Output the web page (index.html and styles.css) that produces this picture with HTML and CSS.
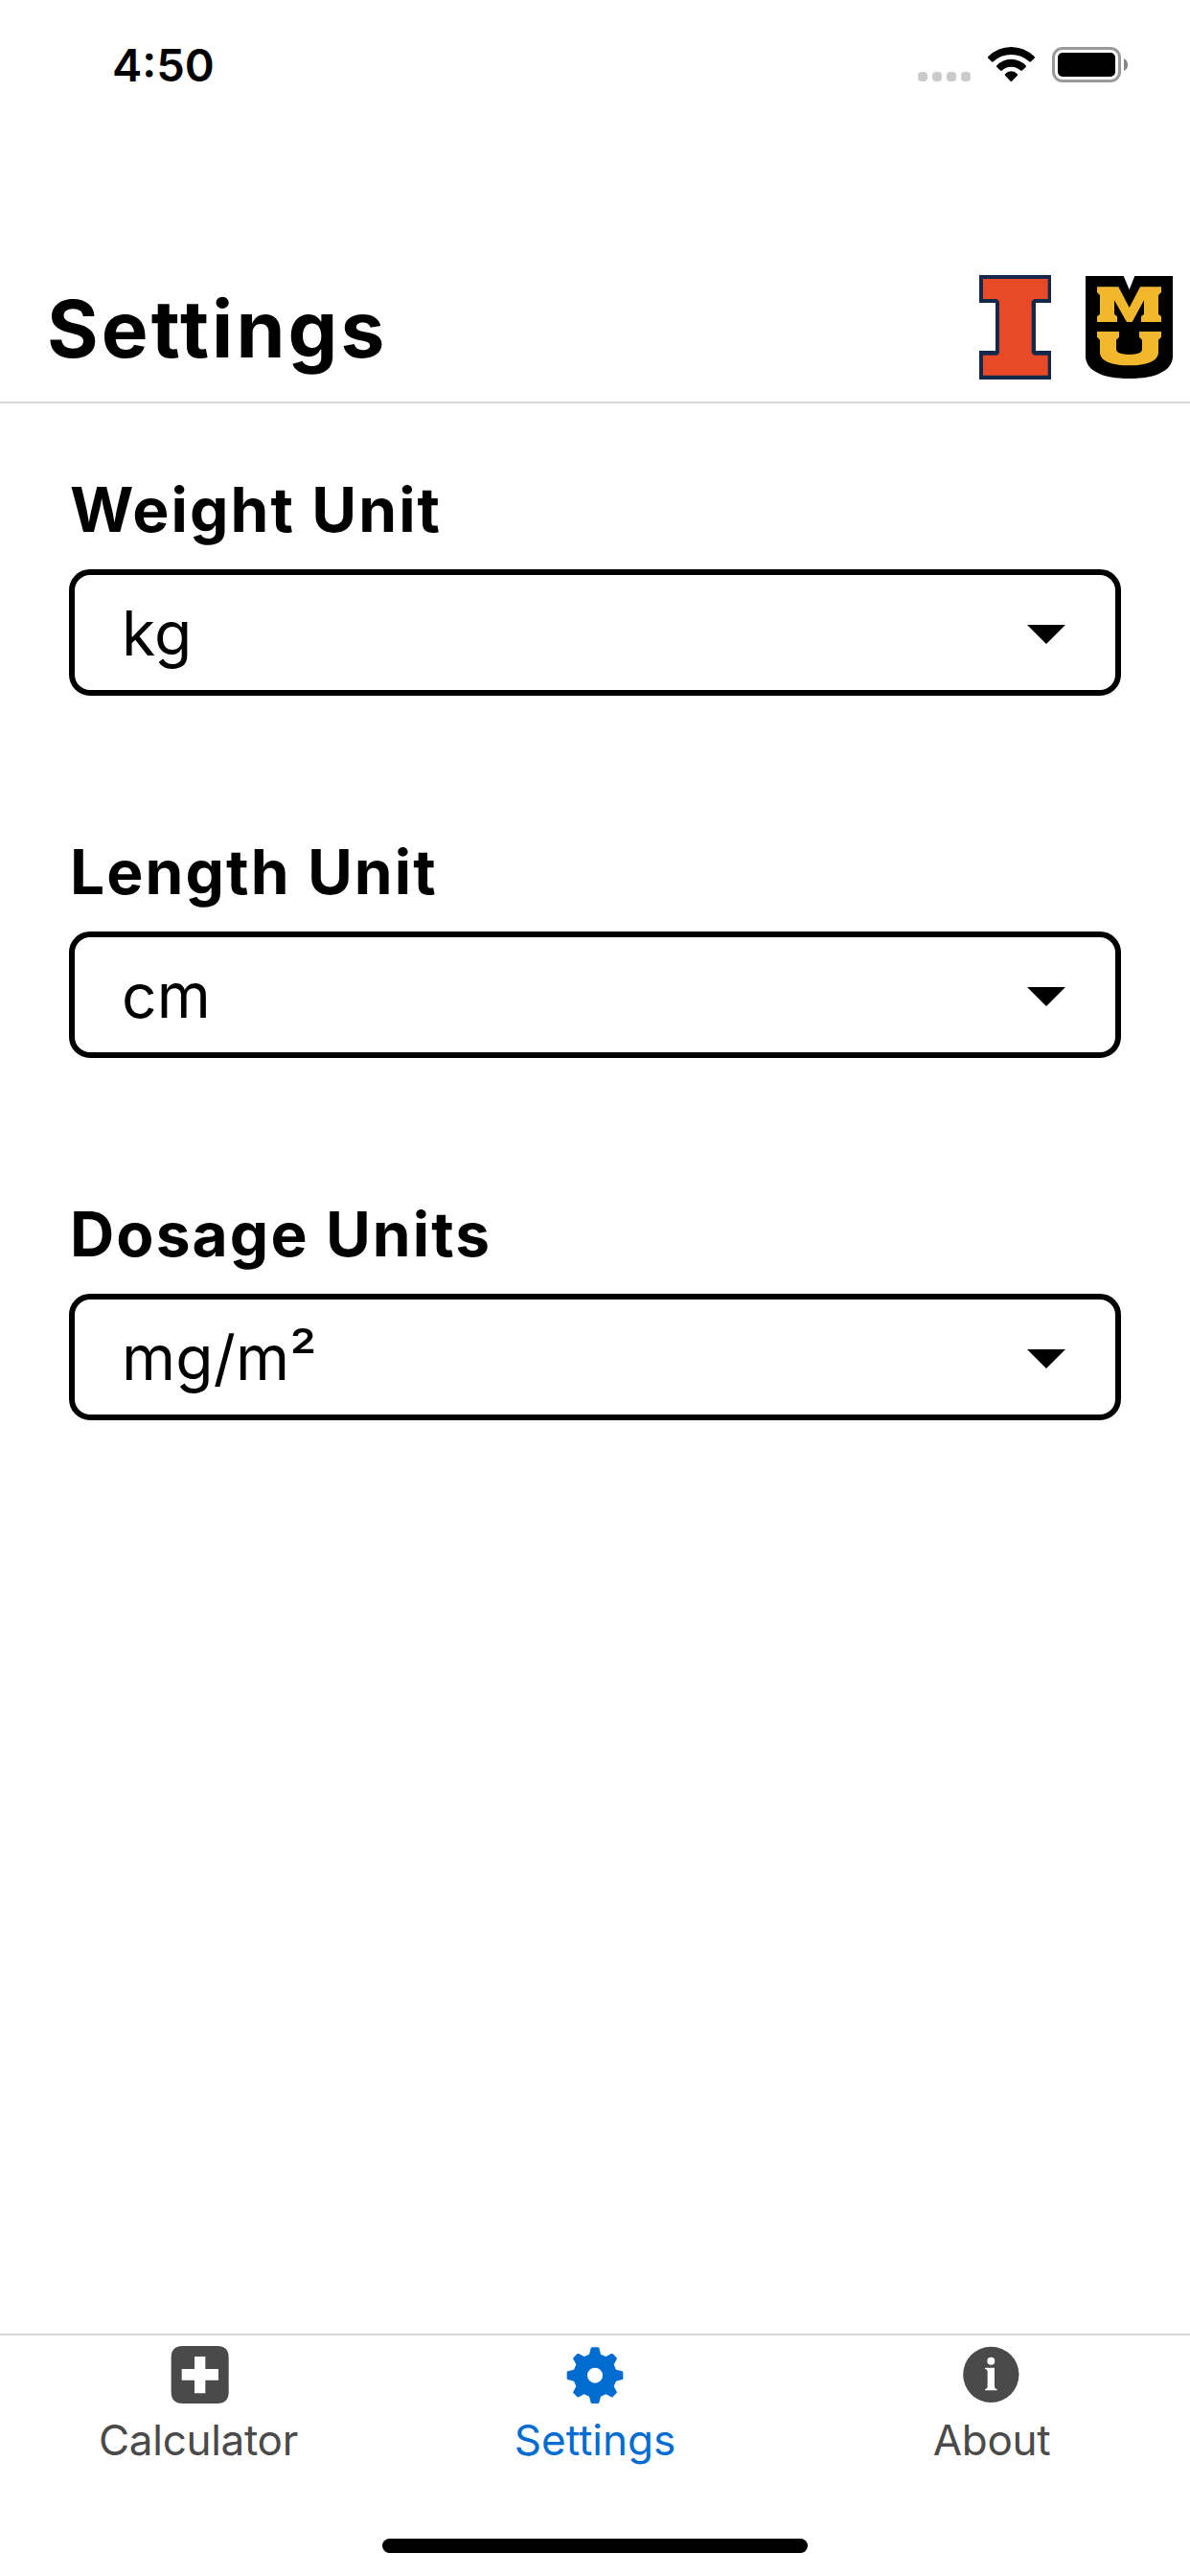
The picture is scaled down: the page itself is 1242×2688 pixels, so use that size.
FILE: index.html
```html
<!DOCTYPE html>
<html lang="en">
<head>
<meta charset="utf-8">
<title>Settings</title>
<link rel="stylesheet" href="styles.css">
</head>
<body>
<div class="screen">
  <div class="status-bar">
    <span class="time">4:50</span>
    <svg class="status-icons" viewBox="0 0 220 40" aria-hidden="true">
      <g fill="#cbcbcb">
        <rect x="0" y="27" width="10" height="10" rx="4"/>
        <rect x="15" y="27" width="10" height="10" rx="4"/>
        <rect x="30" y="27" width="10" height="10" rx="4"/>
        <rect x="45" y="27" width="10" height="10" rx="4"/>
      </g>
      <g transform="translate(-18 -18) scale(.33333)">
        <path d="M274 87Q305 57 346 57T419 87Q421 90 419 92L408 103Q406 105 403 103Q378 81 346 81T290 103Q287 105 285 103L274 92Q272 90 274 87Z"/>
        <path d="M301 115Q320 95 346 95T392 115Q394 118 392 120L380 131Q378 132 376 131Q363 119 346 119T317 131Q315 132 313 131L301 120Q299 118 301 115Z"/>
        <path d="M327 142Q335 133 346 133T366 142Q367 144 366 146L348 164Q346 166 344 164L327 146Q326 144 327 142Z"/>
      </g>
      <rect x="141.500" y="2.500" width="69" height="34" rx="9.500" fill="none" stroke="#999" stroke-width="3"/>
      <rect x="146" y="7" width="60" height="25" rx="5"/>
      <path d="M215 13Q219 15 219 19.500T215 26Z" fill="#858585"/>
    </svg>
  </div>

  <header class="header">
    <h1 class="title">Settings</h1>
    <div class="logos">
      <svg class="logo-illinois" viewBox="66 51 225 327" aria-label="Illinois">
        <path fill="#13294b" d="M66 51H291V138H243V288H291V378H66V288H117V138H66Z"/>
        <path fill="#e84a27" d="M78 63H281V126H240Q231 128 230 137V291Q231 300 240 302H281V365H78V302H120Q129 300 129 291V137Q128 128 120 126H78Z"/>
      </svg>
      <svg class="logo-missouri" viewBox="399 54 273 321" aria-label="Missouri">
        <path d="M399 54H518L536 97L553 54H672V309C668 350 622 375 536 375S403 350 399 309Z"/>
        <g fill="#f1b82d">
          <path d="M435 88H502L536 153L570 88H636V105L627 114V173L636 181V198H573V181L582 173V130L545 198H528L489 130V173L498 181V198H435V181L444 173V114L435 105Z"/>
          <path d="M435 228H504V245L495 254V283Q496 300 536 300T576 283V254L567 245V228H636V245L627 254V293C627 320 590 334 536 334S444 320 444 293V254L435 245Z"/>
        </g>
      </svg>
    </div>
  </header>

  <main class="content">
    <section class="field">
      <h2 class="label">Weight Unit</h2>
      <div class="select"><span>kg</span><svg class="caret" viewBox="0 0 40 20"><path d="M0 0H40L20 20Z"/></svg></div>
    </section>
    <section class="field">
      <h2 class="label">Length Unit</h2>
      <div class="select"><span>cm</span><svg class="caret" viewBox="0 0 40 20"><path d="M0 0H40L20 20Z"/></svg></div>
    </section>
    <section class="field">
      <h2 class="label">Dosage Units</h2>
      <div class="select"><span>mg/m²</span><svg class="caret" viewBox="0 0 40 20"><path d="M0 0H40L20 20Z"/></svg></div>
    </section>
  </main>

  <footer class="footer">
    <nav class="tabs">
      <a class="tab">
        <svg class="tab-icon" viewBox="-113 -108 216 216"><path fill-rule="evenodd" d="M-54 -90H54Q90 -90 90 -54V54Q90 90 54 90H-54Q-90 90 -90 54V-54Q-90 -90 -54 -90ZM-17 -57V-18H-57V17H-17V58H17V17H58V-18H17V-57Z"/></svg>
        <span>Calculator</span>
      </a>
      <a class="tab active">
        <svg class="tab-icon" viewBox="-108 -110 216 216"><path fill-rule="evenodd" d="M-9 -88H9Q12 -88 13 -85L18 -66L34 -59L51 -68Q54 -70 56 -67L67 -56Q70 -54 68 -51L59 -34L66 -18L85 -13Q88 -12 88 -9V9Q88 12 85 13L66 18L59 34L68 51Q70 54 67 56L56 67Q54 70 51 68L34 59L18 66L13 85Q12 88 9 88H-9Q-12 88 -13 85L-18 66L-34 59L-51 68Q-54 70 -56 67L-67 56Q-70 54 -68 51L-59 34L-66 18L-85 13Q-88 12 -88 9V-9Q-88 -12 -85 -13L-66 -18L-59 -34L-68 -51Q-70 -54 -67 -56L-56 -67Q-54 -70 -51 -68L-34 -59L-18 -66L-13 -85Q-12 -88 -9 -88ZM0 -24A24 24 0 1 0 0 24A24 24 0 1 0 0 -24Z"/></svg>
        <span>Settings</span>
      </a>
      <a class="tab">
        <svg class="tab-icon" viewBox="-106 -107.500 216 216"><circle r="87.500"/><g fill="#fff"><circle cy="-42" r="12"/><path d="M-19 -21H11V38Q11 44 19 46V49H-19V46Q-11 44 -11 38V-10Q-11 -16 -19 -18Z"/></g></svg>
        <span>About</span>
      </a>
    </nav>
    <div class="home-indicator"></div>
  </footer>
</div>
</body>
</html>
```
FILE: styles.css
```css
* {
  box-sizing: border-box;
}

body {
  margin: 0;
  background: #fff;
  color: #000;
  font-family: Inter, "Liberation Sans", sans-serif;
}

.screen {
  display: flex;
  flex-direction: column;
  width: 1242px;
  height: 2688px;
}

.status-bar {
  display: flex;
  justify-content: space-between;
  align-items: flex-start;
  height: 132px;
  padding: 39px 64px 0 117px;
}

.time {
  font-size: 47px;
  font-weight: 600;
  line-height: 57px;
}

.status-icons {
  width: 220px;
  height: 40px;
  margin-top: 9px;
}

.header {
  display: flex;
  justify-content: space-between;
  align-items: center;
  padding: 155px 18px 23px 49px;
  border-bottom: 2px solid #d8d8d8;
}

.title {
  margin: 0;
  padding-top: 4px;
  font-size: 82px;
  font-weight: 700;
  line-height: 99px;
  letter-spacing: 3.1px;
}

.logos {
  display: flex;
  align-items: center;
  gap: 36px;
}

.logo-illinois {
  display: block;
  width: 75px;
  height: 109px;
}

.logo-missouri {
  display: block;
  width: 91px;
  height: 107px;
}

.content {
  display: flex;
  flex: 1;
  flex-direction: column;
  gap: 145px;
  padding: 72px;
}

.field {
  display: flex;
  flex-direction: column;
  gap: 24px;
}

.label {
  margin: 0;
  padding-left: 1px;
  font-size: 64px;
  font-weight: 700;
  line-height: 77px;
  letter-spacing: 2.1px;
}

.select {
  display: flex;
  justify-content: space-between;
  align-items: center;
  height: 132px;
  padding: 1px 52px 0 49px;
  border: 6px solid #000;
  border-radius: 22px;
  font-size: 64px;
  line-height: 77px;
  letter-spacing: .2px;
}

.caret {
  width: 40px;
  height: 20px;
  margin-top: 3px;
}

.footer {
  display: flex;
  flex-direction: column;
  height: 253px;
  border-top: 2px solid #d8d8d8;
}

.tabs {
  display: grid;
  grid-template-columns: repeat(3, 1fr);
  padding-top: 5px;
}

.tab {
  display: flex;
  flex-direction: column;
  align-items: center;
  gap: 5px;
  color: #4a4a4a;
  fill: currentColor;
  font-size: 44px;
  line-height: 54px;
  letter-spacing: -.3px;
}

.tab.active {
  color: #006bd1;
  letter-spacing: 0;
}

.tab-icon {
  width: 72px;
  height: 72px;
}

.home-indicator {
  width: 444px;
  height: 15px;
  margin: 76px auto 0;
  border-radius: 8px;
  background: #000;
}
```
